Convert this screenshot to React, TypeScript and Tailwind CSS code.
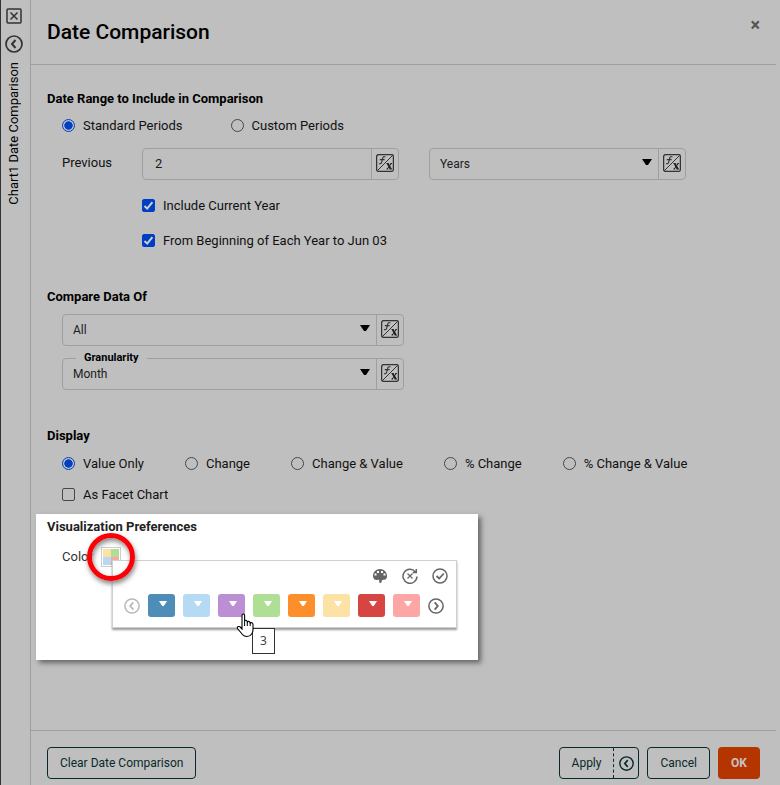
import { useState, type ReactNode } from "react";

function FxIcon() {
  return (
    <svg width="18" height="18" viewBox="0 0 18 18" fill="none" aria-hidden="true">
      <rect x="0.6" y="0.6" width="16.800" height="16.800" rx="2" stroke="#333" strokeWidth="1.300" />
      <path d="M1.500 16.500 16.500 1.500" stroke="#333" strokeWidth="1" />
      <path d="M9.500 3C8 2.300 7 2.800 6.600 4.500L5.600 8.300C5.300 9.600 4.500 10 3 9.600M3.800 5.600H8.600" stroke="#333" strokeWidth="1.100" />
      <path d="M11.700 9.500 14.700 15" stroke="#222" strokeWidth="2" />
      <path d="M15.300 9.500 11.200 15M10.500 9.500H12.500M14.300 9.500H16M10.500 15H12.200M13.800 15H16" stroke="#222" strokeWidth="1" />
    </svg>
  );
}

function FxButton() {
  return (
    <button type="button" aria-label="Edit expression" className="flex w-[27px] shrink-0 items-start justify-center border-l border-[#9f9f9f] pt-[5px] pr-px">
      <FxIcon />
    </button>
  );
}

function Triangle({ className = "" }: { className?: string }) {
  return (
    <svg viewBox="0 0 10 6" className={className} aria-hidden="true">
      <path d="M0 0H10L6 6H4Z" fill="currentColor" />
    </svg>
  );
}

function Chevron({ size, flip = false, width = 2 }: { size: number; flip?: boolean; width?: number }) {
  return (
    <svg width={size} height={size} viewBox="0 0 18 18" fill="none" stroke="currentColor" aria-hidden="true">
      <circle cx="9" cy="9" r="8" strokeWidth={width * 0.85} />
      <path d={flip ? "M7.500 5 11 9 7.500 13" : "M10.500 5 7 9 10.500 13"} strokeWidth={width} />
    </svg>
  );
}

function Radio({ name, label, checked, onChange }: { name: string; label: string; checked: boolean; onChange: () => void }) {
  return (
    <label className="flex h-[21px] items-center gap-2 whitespace-nowrap">
      <input
        type="radio"
        name={name}
        checked={checked}
        onChange={onChange}
        className="size-[13px] appearance-none rounded-full border border-[#484848] checked:border-[#003fc4] checked:bg-[radial-gradient(closest-side,#003fc4_70%,transparent_82%)]"
      />
      {label}
    </label>
  );
}

function Check({ label, initial = false }: { label: string; initial?: boolean }) {
  return (
    <label className="flex h-[21px] w-fit items-center gap-2">
      <span className="grid">
        <input
          type="checkbox"
          defaultChecked={initial}
          className="peer col-start-1 row-start-1 size-[13px] appearance-none rounded-xs border border-[#484848] checked:border-[#003fc4] checked:bg-[#003fc4]"
        />
        <svg viewBox="0 0 13 13" className="pointer-events-none invisible col-start-1 row-start-1 size-[13px] peer-checked:visible" fill="none" aria-hidden="true">
          <path d="M2.500 7 5.200 9.600 10.400 3.200" stroke="#d0d0d0" strokeWidth="2" />
        </svg>
      </span>
      {label}
    </label>
  );
}

function Field({ className, children }: { className: string; children: ReactNode }) {
  return <div className={`relative flex h-8 rounded-sm border border-[#9f9f9f] text-[#1c1c1c] ${className}`}>{children}</div>;
}

function Select({ label, options }: { label: string; options: string[] }) {
  return (
    <div className="grid flex-1 items-center text-xs">
      <select aria-label={label} className="col-start-1 row-start-1 h-full w-full appearance-none bg-transparent px-[10px]">
        {options.map((o) => (
          <option key={o}>{o}</option>
        ))}
      </select>
      <Triangle className="pointer-events-none col-start-1 row-start-1 mr-[6px] mb-1 h-[6px] w-[10px] justify-self-end text-black" />
    </div>
  );
}

const periods = ["Standard Periods", "Custom Periods"];
const displays = ["Value Only", "Change", "Change & Value", "% Change", "% Change & Value"];
const swatches = ["bg-[#4f8db9]", "bg-[#b5daf3]", "bg-[#bc8fd4]", "bg-[#aedf94]", "bg-[#fc8f2b]", "bg-[#fde2a6]", "bg-[#d64541]", "bg-[#fca6a6]"];
const heading = "text-[13px]/5 font-bold text-black";
const outlined = "flex h-8 items-center rounded-sm border border-[#07292b] text-[#07292b]";

function ColorPopup() {
  return (
    <div className="absolute top-[46px] left-[76px] flex w-[345px] flex-col border border-[#d0d0d0] bg-white pt-[7px] pb-[10px] text-[#666] shadow-[0px_2px_2px_#9a9a9a]">
      <div className="flex h-4 items-center justify-end gap-[14px] pr-2">
        <button type="button" aria-label="Palette">
          <svg width="16" height="16" viewBox="0 0 16 16" aria-hidden="true">
            <path d="M8 1C4 1 1 4 1 8C1 11 3.500 12.800 6 11.800C7 11.400 7.300 12 7.200 13C7.100 14.500 7.500 15 8.500 15C9.800 15 9.500 13.800 9.800 12.800C10 12 10.800 11.800 12 11.800C14.200 11.800 15 10 15 8C15 4 12 1 8 1Z" fill="currentColor" />
            <g fill="#fff">
              <rect x="2.500" y="5.500" width="2" height="2" />
              <rect x="5" y="3" width="2" height="2" />
              <rect x="9" y="3" width="2" height="2" />
              <rect x="11.500" y="5.500" width="2" height="2" />
            </g>
          </svg>
        </button>
        <button type="button" aria-label="Reset">
          <svg width="16" height="16" viewBox="0 0 16 16" fill="none" stroke="currentColor" strokeWidth="1.500" aria-hidden="true">
            <path d="M13.300 3.700A7 7 0 1 0 15 8.500M14.300 1V4.600H10.700" />
            <path d="M5.500 5.500 10.500 10.500M10.500 5.500 5.500 10.500" strokeWidth="1.200" />
          </svg>
        </button>
        <button type="button" aria-label="Accept">
          <svg width="16" height="16" viewBox="0 0 16 16" fill="none" stroke="currentColor" strokeWidth="1.500" aria-hidden="true">
            <circle cx="8" cy="8" r="7" />
            <path d="M4.500 8 7.200 10.500 11.800 5.500" strokeWidth="1.800" />
          </svg>
        </button>
      </div>
      <div className="mt-[10px] flex items-center gap-2 pl-[11px]">
        <button type="button" aria-label="Previous colors" className="text-[#b8b8b8]">
          <Chevron size={16} width={2} />
        </button>
        {swatches.map((color, i) => (
          <button key={color} type="button" aria-label={`Color ${i + 1}`} className={`flex h-[23px] w-[27px] justify-center rounded-[3px] pt-[7px] pl-[2px] text-white ${color}`}>
            <Triangle className="h-[5px] w-2" />
          </button>
        ))}
        <button type="button" aria-label="Next colors">
          <Chevron size={16} flip width={2} />
        </button>
      </div>
      <div role="tooltip" className="absolute top-[67px] left-[139px] flex h-[26px] w-[23px] items-center justify-center border border-[#333] bg-white font-['Noto_Sans'] text-xs text-[#444]">
        3
      </div>
      <svg width="19" height="25" viewBox="0 0 19 25" className="absolute top-[52px] left-[123px]" aria-hidden="true">
        <path d="M6 14V2.500Q6 1 7.300 1T8.600 2.500V8Q9 7 10 7.300T11.300 9Q12 8 13 8.500T14.200 10Q15 9.300 16 9.800T17 11.500V17Q17 19 15.700 21 14 23.500 11 23.500 8 23.500 6.500 21.500L1.500 15.500Q1 14 2 13.600T4 13.800L6 16Z" fill="#fff" stroke="#000" strokeWidth="1.100" />
        <path d="M8.600 8V13M11.300 9V13M14.200 10V13" stroke="#000" />
      </svg>
    </div>
  );
}

export default function App() {
  const [period, setPeriod] = useState(0);
  const [display, setDisplay] = useState(0);
  return (
    <div className="flex min-h-screen bg-[#bfbfbf] font-[Roboto,sans-serif] text-[13px]/5 text-[#111]">
      <aside className="flex w-[31px] shrink-0 flex-col items-center border-r border-l border-r-[#9f9f9f] border-l-[#333] pt-2 pr-1 text-[#333]">
        <button type="button" aria-label="Close panel">
          <svg width="16" height="16" viewBox="0 0 16 16" fill="none" stroke="currentColor" aria-hidden="true">
            <rect x="1" y="1" width="14" height="14" rx="1" strokeWidth="1.500" />
            <path d="M4.500 4.500 11.500 11.500M11.500 4.500 4.500 11.500" strokeWidth="1.500" />
          </svg>
        </button>
        <button type="button" aria-label="Collapse panel" className="mt-[11px]">
          <Chevron size={18} width={2} />
        </button>
        <div className="mt-[9px] rotate-180 text-black [writing-mode:vertical-rl]">Chart1 Date Comparison</div>
      </aside>

      <main className="mr-1 flex min-w-0 flex-1 flex-col">
        <header className="flex h-[65px] items-start justify-between border-b border-[#9f9f9f] px-4">
          <h1 className="pt-4 text-[21px]/8 font-medium text-black">Date Comparison</h1>
          <button type="button" aria-label="Close" className="pt-[15px] text-lg/5 font-bold text-[#555]">
            ×
          </button>
        </header>

        <div className="flex-1 px-4 pt-6">
          <h2 className={heading}>Date Range to Include in Comparison</h2>
          <div className="mt-1.5 ml-[15px] flex gap-12">
            {periods.map((p, i) => (
              <Radio key={p} name="period" label={p} checked={period === i} onChange={() => setPeriod(i)} />
            ))}
          </div>
          <div className="mt-3 ml-[15px] flex">
            <label htmlFor="previous" className="w-20 pt-[5px]">
              Previous
            </label>
            <Field className="mr-[30px] w-[257px]">
              <input id="previous" defaultValue="2" className="min-w-0 flex-1 bg-transparent px-3" />
              <FxButton />
            </Field>
            <Field className="w-[257px]">
              <Select label="Period unit" options={["Years", "Months"]} />
              <FxButton />
            </Field>
          </div>
          <div className="mt-[15px] ml-[95px] flex flex-col gap-[14px]">
            <Check label="Include Current Year" initial />
            <Check label="From Beginning of Each Year to Jun 03" initial />
          </div>

          <h2 className={`mt-9 ${heading}`}>Compare Data Of</h2>
          <div className="mt-[7px] ml-[15px] flex flex-col gap-3">
            <Field className="w-[342px]">
              <Select label="Compare data of" options={["All"]} />
              <FxButton />
            </Field>
            <Field className="w-[342px]">
              <span className="absolute -top-2 left-[13px] bg-[#bfbfbf] px-2 text-[11px]/[14px] font-bold text-black">Granularity</span>
              <Select label="Granularity" options={["Month", "Quarter"]} />
              <FxButton />
            </Field>
          </div>

          <h2 className={`mt-9 ${heading}`}>Display</h2>
          <div className="mt-[7px] ml-[15px] flex gap-[41px]">
            {displays.map((d, i) => (
              <Radio key={d} name="display" label={d} checked={display === i} onChange={() => setDisplay(i)} />
            ))}
          </div>
          <div className="mt-[10px] ml-[15px]">
            <Check label="As Facet Chart" />
          </div>

          <section className="relative mt-[9px] -ml-[11px] h-[146px] w-[442px] bg-white pt-[3px] pl-[11px] shadow-[3px_3px_5px_#666]">
            <h2 className="text-[13px]/5 font-bold text-[#222]">Visualization Preferences</h2>
            <div className="mt-[10px] ml-[15px] flex text-[#333]">
              <span className="w-[39px]">Color</span>
              <button type="button" aria-label="Choose color" className="grid size-[20px] grid-cols-2 border border-[#ccc] p-px">
                <span className="h-2 bg-[#fde2a6]" />
                <span className="h-2 bg-[#aedf94]" />
                <span className="h-2 bg-[#b5daf3]" />
                <span className="h-2 bg-[#fca6a6]" />
              </button>
            </div>
            <ColorPopup />
            <div className="pointer-events-none absolute top-[19px] left-[51px] size-12 rounded-full border-[5px] border-[#fb0007] shadow-[1px_3px_5px_#888,inset_1px_3px_5px_#888]" />
          </section>
        </div>

        <footer className="flex items-start justify-between border-t border-[#9f9f9f] px-4 pt-4 pb-[6px] text-xs">
          <button type="button" className={`px-3 ${outlined}`}>
            Clear Date Comparison
          </button>
          <div className="flex gap-2">
            <div className={outlined}>
              <button type="button" className="px-3">
                Apply
              </button>
              <button type="button" aria-label="Apply and collapse" className="flex h-full w-[25px] items-center justify-center border-l border-dashed border-[#07292b]">
                <Chevron size={15} width={2} />
              </button>
            </div>
            <button type="button" className={`px-3 ${outlined}`}>
              Cancel
            </button>
            <button type="button" className="h-8 w-[42px] rounded-sm bg-[#b43500] font-bold text-[#c4c4c4]">
              OK
            </button>
          </div>
        </footer>
      </main>
    </div>
  );
}
